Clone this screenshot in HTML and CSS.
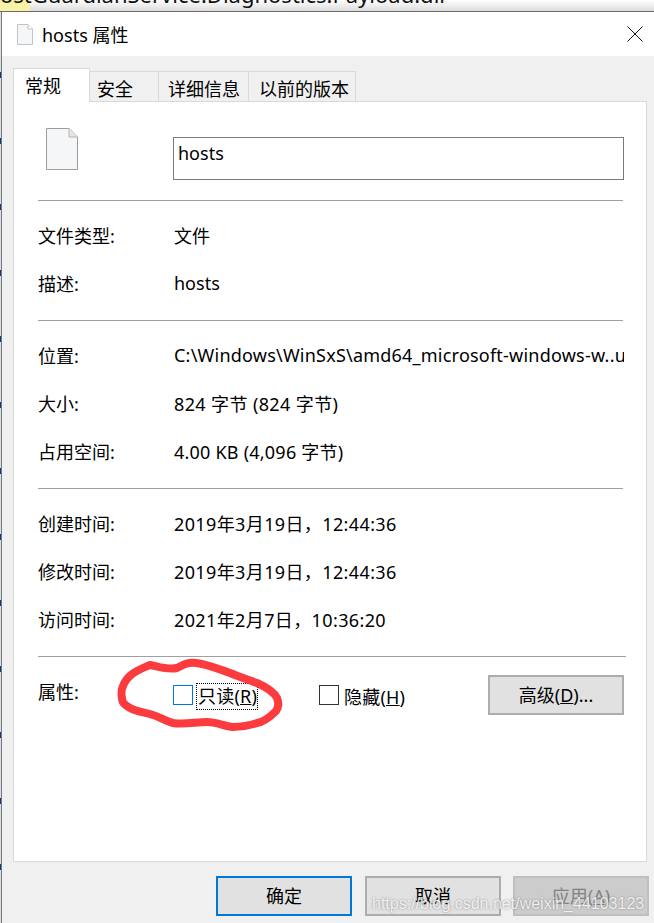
FILE: index.html
```html
<!DOCTYPE html>
<html lang="zh-CN">

<head>
    <meta charset="UTF-8">
    <title>hosts 属性</title>
    <link rel="stylesheet" href="styles.css">
</head>

<body>
    <div class="behind-title"><span>ostGuardianService.Diagnostics.Payload.dll</span></div>

    <div class="desktop">
        <div class="left-edge"></div>
        <div class="dialog">
            <div class="titlebar">
                <svg class="title-icon" viewBox="0 0 16 21">
                    <path d="M.5.5H11L15.5 5V20.5H.5Z" fill="#f4f6f8" stroke="#c4c4c4" />
                    <path d="M11 .5V5H15.5" fill="#fff" stroke="#c4c4c4" />
                </svg>
                <span class="title-text">hosts 属性</span>
                <svg class="close-icon" viewBox="0 0 16 16">
                    <path d="M.5.5L15.5 15.5M15.5.5L.5 15.5" stroke="#111" fill="none" />
                </svg>
            </div>

            <div class="dialog-body">
                <div class="tabs">
                    <div class="tab tab-active">常规</div>
                    <div class="tab tab-safe">安全</div>
                    <div class="tab tab-details">详细信息</div>
                    <div class="tab tab-versions">以前的版本</div>
                </div>

                <div class="panel">
                    <div class="file-head">
                        <svg class="file-icon" viewBox="0 0 32 42">
                            <path d="M.5.5H23L31.5 9V41.5H.5Z" fill="#f4f6f8" stroke="#9c9c9c" />
                            <path d="M23 .5V9H31.5" fill="#e4e4e4" stroke="#b5b5b5" />
                        </svg>
                        <input class="file-name" type="text" value="hosts">
                    </div>

                    <div class="section">
                        <div class="row"><span>文件类型:</span><span>文件</span></div>
                        <div class="row"><span>描述:</span><span>hosts</span></div>
                    </div>

                    <div class="section">
                        <div class="row"><span>位置:</span><span class="value-path">C:\Windows\WinSxS\amd64_microsoft-windows-w..updated</span></div>
                        <div class="row"><span>大小:</span><span class="value-wide">824 字节 (824 字节)</span></div>
                        <div class="row"><span>占用空间:</span><span class="value-path">4.00 KB (4,096 字节)</span></div>
                    </div>

                    <div class="section">
                        <div class="row"><span>创建时间:</span><span class="value-wide">2019年3月19日，12:44:36</span></div>
                        <div class="row"><span>修改时间:</span><span class="value-wide">2019年3月19日，12:44:36</span></div>
                        <div class="row"><span>访问时间:</span><span class="value-wide">2021年2月7日，10:36:20</span></div>
                    </div>

                    <div class="attrs">
                        <span class="attrs-label">属性:</span>
                        <label class="check check-readonly">
                            <input type="checkbox" class="box box-focus">
                            <span class="check-text check-text-focus">只读(<u>R</u>)</span>
                        </label>
                        <label class="check check-hidden">
                            <input type="checkbox" class="box">
                            <span class="check-text">隐藏(<u>H</u>)</span>
                        </label>
                        <button class="btn btn-advanced">高级(<u>D</u>)...</button>
                    </div>
                </div>

                <div class="footer">
                    <button class="btn btn-default">确定</button>
                    <button class="btn btn-cancel">取消</button>
                    <button class="btn btn-disabled">应用(<u>A</u>)</button>
                </div>
            </div>
        </div>
    </div>

    <!-- red marker drawn over the screenshot -->
    <svg class="marker" viewBox="0 0 654 923">
        <path d="M150 665C160 667 168 670 177 668C183 665 187 662 196 663C207 664 218 669 230 673C240 677 249 680 257 683C266 687 274 692 277 698C279 703 279 707 276 711C270 717 264 722 257 723C248 726 241 727 233 727C224 726 216 722 207 722C196 722 184 725 173 723C165 721 160 717 153 715C145 712 137 712 130 708C125 705 122 703 122 698C121 693 121 690 123 686C125 681 127 678 131 675C137 670 143 668 150 665Z" fill="none" stroke="#fb3b3e" stroke-width="8" stroke-linejoin="round" />
    </svg>

    <div class="watermark">https://blog.csdn.net/weixin_44103123</div>
</body>

</html>
```

FILE: styles.css
```css
* {
    box-sizing: border-box;
}

html,
body {
    height: 100%;
}

body {
    margin: 0;
    position: relative;
    overflow: hidden;
    display: flex;
    flex-direction: column;
    background-color: #fff;
    font-family: "Noto Sans", "Noto Sans CJK SC", sans-serif;
    font-size: 18px;
    color: #000;
}

.behind-title {
    height: 12px;
    flex: none;
    overflow: hidden;
    white-space: nowrap;
    border-bottom: 1px solid #6b6b6b;
    background: linear-gradient(90deg, #f7f2a6 0, #f7f2a6 30px, rgba(255, 255, 255, 0) 30px),
        linear-gradient(180deg, #fff 0, #dcdcdc 100%);
}

.behind-title span {
    display: block;
    margin-top: -24px;
    font-size: 22px;
    line-height: 36px;
    color: #111;
}

.desktop {
    flex: 1;
    display: flex;
    min-height: 0;
}

.left-edge {
    width: 2px;
    flex: none;
    border-right: 1px solid #777;
    background: repeating-linear-gradient(180deg, #d8dfe8 0, #d8dfe8 60px, #123a8c 60px, #123a8c 66px);
}

.dialog {
    flex: 1;
    display: flex;
    flex-direction: column;
}

.titlebar {
    height: 44px;
    flex: none;
    display: flex;
    align-items: center;
    padding: 0 11px 0 15px;
    background-color: #fff;
}

.title-icon {
    width: 16px;
    height: 21px;
    margin-right: 9px;
}

.title-text {
    flex: 1;
}

.close-icon {
    width: 16px;
    height: 16px;
}

.dialog-body {
    flex: 1;
    display: flex;
    flex-direction: column;
    padding: 12px 5px 0 11px;
    background-color: #f0f0f0;
}

.tabs {
    display: flex;
    align-items: flex-end;
    height: 34px;
    flex: none;
    margin-bottom: -1px;
    position: relative;
    z-index: 1;
}

.tab {
    height: 31px;
    border: 1px solid #d9d9d9;
    border-left: none;
    line-height: 34px;
    background-color: #f0f0f0;
    white-space: nowrap;
}

.tab-active {
    width: 77px;
    height: 34px;
    padding-left: 11px;
    line-height: 35px;
    border-left: 1px solid #d9d9d9;
    border-bottom: none;
    background-color: #fff;
}

.tab-safe {
    width: 69px;
    padding-left: 7px;
}

.tab-details {
    width: 90px;
    padding-left: 9px;
}

.tab-versions {
    width: 107px;
    padding-left: 10px;
}

.panel {
    width: 634px;
    height: 761px;
    flex: none;
    padding: 0 23px 0 24px;
    border: 1px solid #d9d9d9;
    background-color: #fff;
}

.file-head {
    height: 98px;
    display: flex;
    align-items: flex-start;
    padding: 26px 0 0 8px;
}

.file-icon {
    width: 32px;
    height: 42px;
    margin-right: 95px;
}

.file-name {
    width: 451px;
    height: 43px;
    margin-top: 9px;
    margin-right: -3px;
    padding: 0 0 12px 4px;
    border: 1px solid #7a7a7a;
    border-radius: 0;
    outline: none;
    font: inherit;
    color: #000;
}

.section {
    padding: 10px 0 13px;
    border-top: 1px solid #a0a0a0;
}

.row {
    display: grid;
    grid-template-columns: 136px 450px;
    height: 48px;
    align-items: center;
    white-space: nowrap;
}

.row span {
    overflow: hidden;
}

.row .value-path {
    letter-spacing: 0.22px;
}

.row .value-wide {
    letter-spacing: 0.38px;
}

.attrs {
    display: flex;
    align-items: flex-start;
    height: 60px;
    padding-top: 18px;
    margin-right: -3px;
    border-top: 1px solid #a0a0a0;
}

.attrs-label {
    width: 135px;
    line-height: 34px;
}

.check {
    display: flex;
    align-items: center;
    height: 40px;
}

.check-readonly {
    width: 146px;
}

.check-hidden {
    width: 169px;
}

.box {
    appearance: none;
    width: 20px;
    height: 20px;
    margin: 0 5px 0 0;
    border: 1px solid #333;
    border-radius: 0;
    background-color: #fff;
}

.box-focus {
    border-color: #0078d7;
}

.check-text {
    margin-top: 2px;
    letter-spacing: 0.2px;
}

.check-text-focus {
    outline: 1px dotted #000;
    margin-left: -1px;
    padding-left: 1px;
    line-height: 25px;
}

.btn {
    width: 136px;
    height: 40px;
    padding: 0 0 2px;
    border: 2px solid #adadad;
    border-radius: 0;
    background-color: #e1e1e1;
    font: inherit;
    color: #000;
}

.footer {
    display: flex;
    gap: 12px;
    justify-content: flex-end;
    padding-top: 14px;
}

.btn-default {
    border-color: #0078d7;
}

.btn-cancel {
    margin-left: 1px;
}

.btn-disabled {
    border-color: #bfbfbf;
    background-color: #ccc;
    color: #838383;
}

.marker {
    position: absolute;
    top: 0;
    left: 0;
    width: 654px;
    height: 923px;
    pointer-events: none;
}

.watermark {
    position: absolute;
    left: 372px;
    top: 893px;
    font-family: "Liberation Sans", sans-serif;
    font-size: 16px;
    line-height: 22px;
    white-space: nowrap;
    color: rgba(255, 255, 255, 0.85);
    text-shadow: 0 0 2px rgba(90, 90, 90, 0.7);
}
```
